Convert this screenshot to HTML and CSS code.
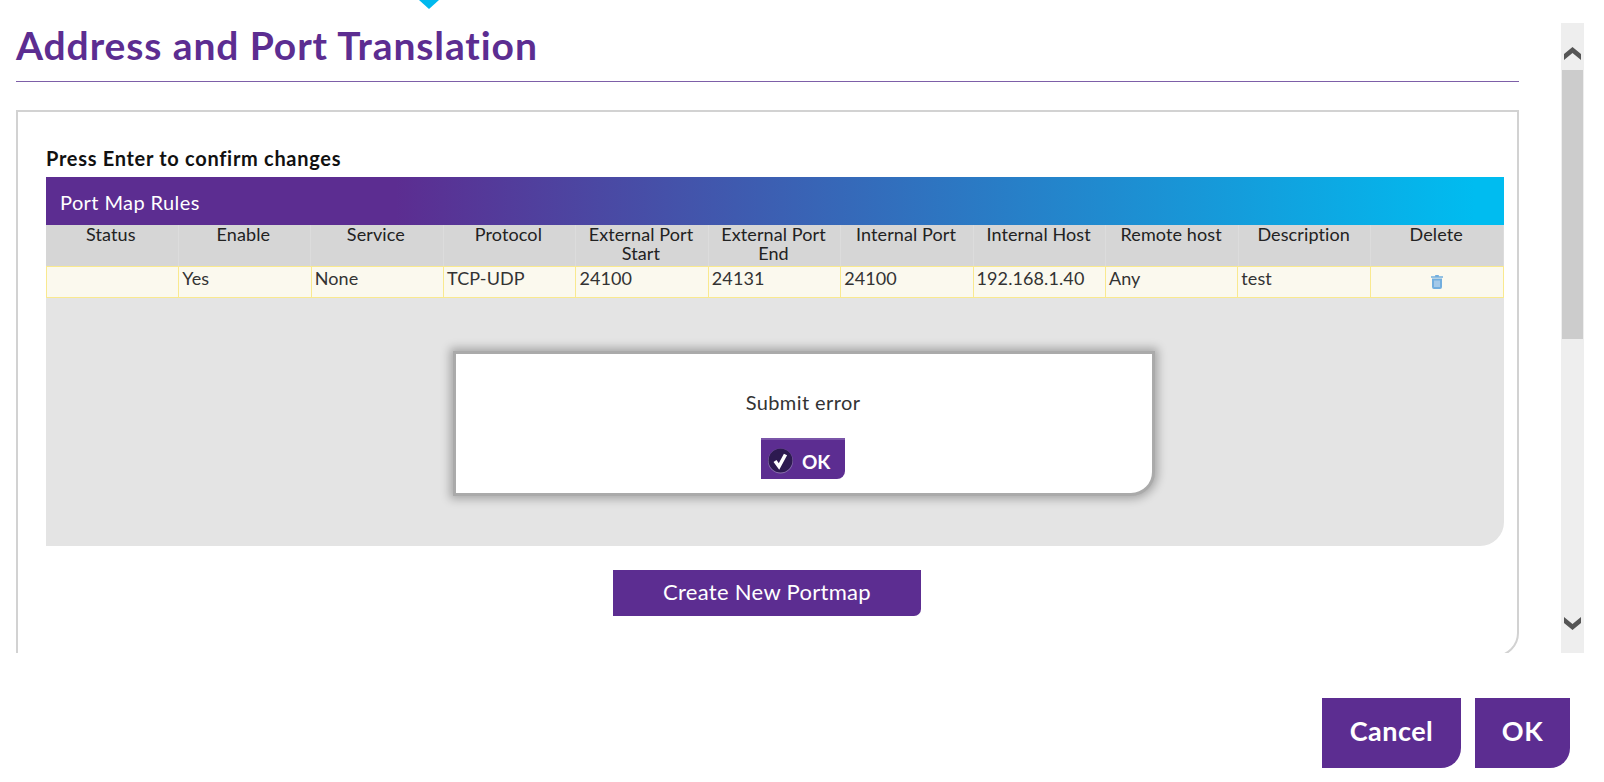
FILE: index.html
```html
<!DOCTYPE html>
<html lang="en">
<head>
<meta charset="utf-8">
<title>Address and Port Translation</title>
<link rel="stylesheet" href="styles.css">
</head>
<body>
<div class="pointer"></div>
<div class="viewport">
  <main class="content">
    <h1 class="title">Address and Port Translation</h1>
    <section class="panel">
      <p class="hint">Press Enter to confirm changes</p>
      <div class="rules">
        <div class="rules-title">Port Map Rules</div>
        <div class="grid head">
          <div class="hcell">Status</div>
          <div class="hcell">Enable</div>
          <div class="hcell">Service</div>
          <div class="hcell">Protocol</div>
          <div class="hcell">External Port Start</div>
          <div class="hcell">External Port End</div>
          <div class="hcell">Internal Port</div>
          <div class="hcell">Internal Host</div>
          <div class="hcell">Remote host</div>
          <div class="hcell">Description</div>
          <div class="hcell">Delete</div>
        </div>
        <div class="grid row">
          <div class="cell"></div>
          <div class="cell">Yes</div>
          <div class="cell">None</div>
          <div class="cell">TCP-UDP</div>
          <div class="cell">24100</div>
          <div class="cell">24131</div>
          <div class="cell">24100</div>
          <div class="cell">192.168.1.40</div>
          <div class="cell">Any</div>
          <div class="cell">test</div>
          <div class="cell cell-icon">
            <svg class="trash" viewBox="0 0 12 14" width="12" height="14" aria-hidden="true">
              <path fill="#72aede" d="M4.2 0h3.6v1.2H12v1.6H0V1.200h4.200zM1 3.600h10v8.400A2 2 0 0 1 9 14H3a2 2 0 0 1-2-2z"/>
              <path stroke="#d4e4f4" stroke-width="1" fill="none" d="M4 5.500v6.500M6 5.500v6.500M8 5.500v6.500"/>
            </svg>
          </div>
        </div>
        <div class="rules-body"></div>
        <div class="dialog" role="alertdialog">
          <p class="dialog-text">Submit error</p>
          <button class="dialog-ok" type="button">
            <svg class="check" viewBox="0 0 25 26" width="25" height="26" aria-hidden="true">
              <circle cx="12.500" cy="13" r="12.500" fill="#8d74b0"/>
              <circle cx="12.500" cy="12.500" r="12" fill="#2d1a50"/>
              <path d="M7 13l4 5.500L17.500 6.500" fill="none" stroke="#fff" stroke-width="3.600"/>
            </svg>
            <span>OK</span>
          </button>
        </div>
      </div>
      <div class="create-wrap"><button class="create" type="button">Create New Portmap</button></div>
    </section>
  </main>
  <div class="scrollbar">
    <div class="scroll-btn">
      <svg viewBox="0 0 17 13" width="17" height="13" aria-hidden="true"><path d="M0 7L8.500 0 17 7V13L8.500 6 0 13z" fill="#555"/></svg>
    </div>
    <div class="scroll-track"><div class="scroll-thumb"></div></div>
    <div class="scroll-btn scroll-btn-down">
      <svg viewBox="0 0 17 13" width="17" height="13" aria-hidden="true"><path d="M0 6L8.500 13 17 6V0L8.500 7 0 0z" fill="#555"/></svg>
    </div>
  </div>
</div>
<footer class="footer">
  <button class="action action-cancel" type="button">Cancel</button>
  <button class="action action-ok" type="button">OK</button>
</footer>
</body>
</html>
```
FILE: styles.css
```css
* { box-sizing: border-box; }
html, body { margin: 0; padding: 0; height: 100%; }
body {
  width: 1604px;
  height: 782px;
  overflow: hidden;
  background: #fff;
  color: #333;
  font-family: "Lato", "Open Sans", sans-serif;
  position: relative;
}
.pointer {
  position: absolute;
  left: 419px;
  top: 0;
  width: 0;
  height: 0;
  border-left: 10px solid transparent;
  border-right: 10px solid transparent;
  border-top: 9px solid #00b9ee;
}
.viewport {
  display: flex;
  height: 653px;
  overflow: hidden;
}
.content {
  width: 1561px;
  padding: 0 42px 0 16px;
  flex: none;
}
.title {
  margin: 0;
  height: 82px;
  padding-top: 22px;
  font-size: 39px;
  line-height: 46px;
  letter-spacing: .9px;
  font-weight: 700;
  color: #5c2d91;
  border-bottom: 1px solid #7d5fa8;
}
.panel {
  margin-top: 28px;
  height: 547px;
  border: 2px solid #d2d2d2;
  border-bottom-right-radius: 24px;
  padding: 34px 13px 0 28px;
}
.hint {
  margin: 0;
  height: 31px;
  font-size: 20px;
  line-height: 25px;
  letter-spacing: .7px;
  font-weight: 700;
  color: #111;
}
.rules { position: relative; }
.rules-title {
  height: 48px;
  padding-left: 14px;
  font-size: 20px;
  letter-spacing: .4px;
  line-height: 50px;
  color: #fff;
  background: linear-gradient(90deg, #5c2d91 24%, #00bcf0 98%);
}
.grid {
  display: grid;
  grid-template-columns: repeat(11, 1fr);
}
.head {
  height: 41px;
  background: #d6d6d6;
}
.hcell {
  padding: 0 8px 0 6px;
  font-size: 18px;
  letter-spacing: .1px;
  line-height: 19px;
  text-align: center;
  color: #222;
  border-right: 1px solid #dcdcdc;
}
.row {
  height: 32px;
  background: #fbf9ee;
  border: 1px solid #f9e98f;
}
.cell {
  padding: 0 3px;
  font-size: 18px;
  letter-spacing: .1px;
  line-height: 22px;
  color: #333;
  border-right: 1px solid #f9e98f;
}
.cell:last-child { border-right: 0; }
.cell-icon { display: flex; justify-content: center; padding-top: 8px; }
.rules-body {
  height: 248px;
  background: #e4e4e4;
  border-bottom-right-radius: 24px;
}
.dialog {
  position: absolute;
  left: 407px;
  top: 174px;
  width: 702px;
  height: 145px;
  background: #fff;
  border: 3px solid #aaa;
  border-bottom-right-radius: 24px;
  box-shadow: 0 0 10px 3px rgba(0,0,0,.28);
  display: flex;
  flex-direction: column;
  align-items: center;
  padding: 36px 2px 0 0;
}
.dialog-text {
  margin: 0;
  font-size: 20px;
  letter-spacing: .4px;
  line-height: 24px;
  color: #333;
}
.dialog-ok {
  margin-top: 24px;
  width: 84px;
  height: 41px;
  padding: 3px 0 0 7px;
  border: 0;
  border-top: 2px solid #7a55a8;
  border-bottom-right-radius: 8px;
  background: #5c2d91;
  color: #fff;
  font-family: inherit;
  font-size: 19px;
  font-weight: 700;
  display: flex;
  align-items: center;
  gap: 9px;
}
.create-wrap {
  display: flex;
  padding: 24px 0 0 567px;
}
.create {
  width: 308px;
  height: 46px;
  padding: 0 0 4px;
  border: 0;
  border-bottom-right-radius: 7px;
  background: #5c2d91;
  color: #fff;
  font-family: inherit;
  font-size: 22px;
  letter-spacing: .3px;
}
.scrollbar {
  width: 23px;
  margin-top: 23px;
  height: 630px;
  background: #eee;
  display: flex;
  flex-direction: column;
}
.scroll-btn {
  height: 47px;
  flex: none;
  display: flex;
  justify-content: center;
  padding-top: 24px;
}
.scroll-btn-down { padding-top: 0; align-items: flex-start; height: 36px; }
.scroll-track { flex: 1; padding: 0 1px; }
.scroll-thumb { height: 269px; background: #ccc; }
.footer {
  display: flex;
  justify-content: flex-end;
  gap: 14px;
  padding: 45px 34px 0 0;
}
.action {
  height: 70px;
  padding: 0 0 6px;
  border: 0;
  border-bottom-right-radius: 20px;
  background: #5c2d91;
  color: #fff;
  font-family: inherit;
  font-size: 27px;
  letter-spacing: .5px;
  font-weight: 700;
}
.action-cancel { width: 139px; }
.action-ok { width: 95px; }
```
